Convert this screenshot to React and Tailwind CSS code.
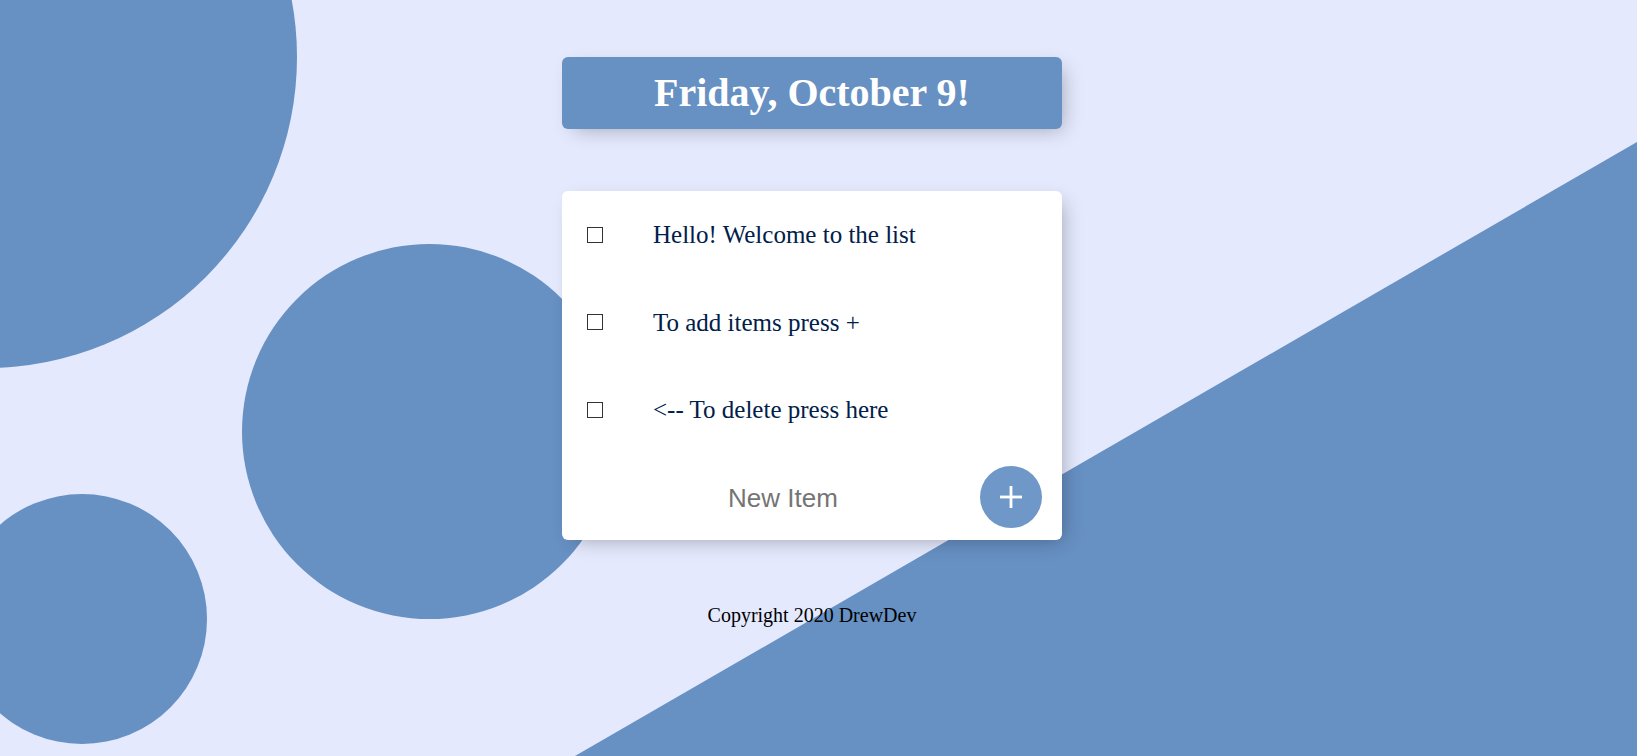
import React from "react";

const items = [
  "Hello! Welcome to the list",
  "To add items press +",
  "<-- To delete press here",
];

export default function App() {
  return (
    <div className="relative h-[756px] w-full overflow-hidden bg-[#E4E9FD]">
      {/* background decorations */}
      <svg
        className="absolute inset-0 h-[756px] w-[1637px]"
        viewBox="0 0 1637 756"
        preserveAspectRatio="none"
      >
        <polygon points="575,756 1637,142 1637,756" fill="#6790C3" />
      </svg>
      <div className="absolute left-[-325px] top-[-254px] h-[622px] w-[622px] rounded-full bg-[#6790C3]" />
      <div className="absolute left-[242px] top-[244px] h-[375px] w-[375px] rounded-full bg-[#6790C3]" />
      <div className="absolute left-[-43px] top-[494px] h-[250px] w-[250px] rounded-full bg-[#6790C3]" />

      {/* content */}
      <div className="relative flex flex-col items-center pr-[13px]">
        <div className="mt-[57px] flex h-[72px] w-[500px] items-center justify-center rounded-[6px] bg-[#6790C3] shadow-[6px_6px_19px_-6px_rgba(0,0,0,0.3)]">
          <h1 className="font-['Liberation_Serif',serif] text-[40px] font-bold leading-[46px] text-white">
            Friday, October 9!
          </h1>
        </div>

        <div className="mt-[62px] w-[500px] rounded-[6px] bg-white shadow-[6px_6px_19px_-6px_rgba(0,0,0,0.3)]">
          {items.map((t) => (
            <div key={t} className="flex h-[87.5px] items-center">
              <span className="ml-[25px] h-[16px] w-[16px] shrink-0 border border-[#333333] bg-white" />
              <p className="ml-[25px] px-[25px] font-['Liberation_Serif',serif] text-[25px] leading-[29px] text-[#00204a]">
                {t}
              </p>
            </div>
          ))}
          <div className="flex h-[86px] items-center">
            <input
              type="text"
              placeholder="New Item"
              className="ml-[25px] mt-[4px] h-[75px] w-[392px] bg-transparent text-center font-['Liberation_Sans',sans-serif] text-[26px] text-[#00204a] outline-none placeholder:text-[#757575]"
            />
            <button className="ml-[1px] flex h-[62px] w-[62px] items-center justify-center rounded-full bg-[#6F98C8]">
              <svg width="22" height="22" viewBox="0 0 22 22">
                <line x1="11" y1="0" x2="11" y2="22" stroke="white" strokeWidth="2.8" />
                <line x1="0" y1="11" x2="22" y2="11" stroke="white" strokeWidth="2.8" />
              </svg>
            </button>
          </div>
        </div>

        <footer className="mt-[64px] font-['Liberation_Serif',serif] text-[20px] leading-[23px] text-black">
          Copyright 2020 DrewDev
        </footer>
      </div>
    </div>
  );
}
